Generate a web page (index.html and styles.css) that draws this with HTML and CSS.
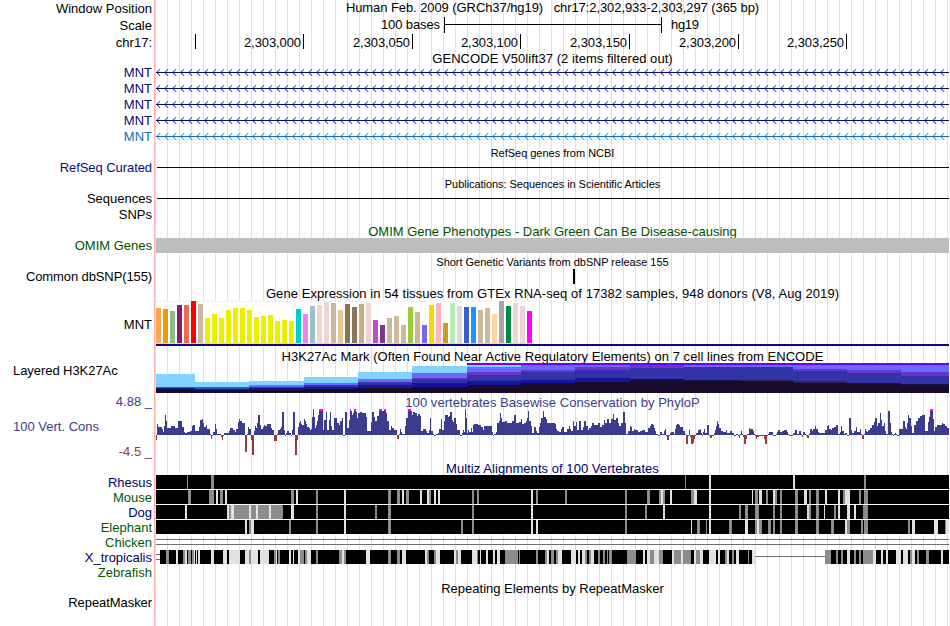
FILE: index.html
```html
<!DOCTYPE html>
<html lang="en">
<head>
    <meta charset="UTF-8">
    <meta name="viewport" content="width=device-width, initial-scale=1.0">
    <title>chr17:2,302,933-2,303,297 - Genome Browser</title>
    <link rel="stylesheet" href="styles.css">
</head>
<body>
    <div class="browser">
        <div class="row position">
            <div class="label">Window Position</div>
            <div class="title">Human Feb. 2009 (GRCh37/hg19) &nbsp; chr17:2,302,933-2,303,297 (365 bp)</div>
        </div>
        <div class="row scale">
            <div class="label">Scale</div>
            <svg class="track" id="scale" viewBox="156 0 793 17"></svg>
        </div>
        <div class="row ruler">
            <div class="label">chr17:</div>
            <svg class="track" id="ruler" viewBox="156 0 793 16"></svg>
        </div>

        <div class="row gencode-title"><div class="title">GENCODE V50lift37 (2 items filtered out)</div></div>
        <div class="row gene"><div class="label">MNT</div><svg class="track arrows" viewBox="156 0 793 16"></svg></div>
        <div class="row gene"><div class="label">MNT</div><svg class="track arrows" viewBox="156 0 793 16"></svg></div>
        <div class="row gene"><div class="label">MNT</div><svg class="track arrows" viewBox="156 0 793 16"></svg></div>
        <div class="row gene"><div class="label">MNT</div><svg class="track arrows" viewBox="156 0 793 16"></svg></div>
        <div class="row gene alt"><div class="label">MNT</div><svg class="track arrows" viewBox="156 0 793 16"></svg></div>

        <div class="row"><div class="title small refseq-title">RefSeq genes from NCBI</div></div>
        <div class="row refseq"><div class="label">RefSeq Curated</div><div class="track"><div class="line"></div></div></div>

        <div class="row short pubs-title"><div class="title small">Publications: Sequences in Scientific Articles</div></div>
        <div class="row pubs"><div class="label">Sequences</div><div class="track"><div class="line"></div></div></div>
        <div class="row pubs"><div class="label">SNPs</div></div>

        <div class="row omim-title"><div class="title">OMIM Gene Phenotypes - Dark Green Can Be Disease-causing</div></div>
        <div class="row omim"><div class="label">OMIM Genes</div><div class="track"><div class="band"></div></div></div>

        <div class="row short"><div class="title small">Short Genetic Variants from dbSNP release 155</div></div>
        <div class="row snp"><div class="label">Common dbSNP(155)</div><svg class="track" viewBox="156 0 793 16"><rect x="573" y="0" width="2" height="15"/></svg></div>

        <div class="row gtex-title"><div class="title">Gene Expression in 54 tissues from GTEx RNA-seq of 17382 samples, 948 donors (V8, Aug 2019)</div></div>
        <div class="row gtex"><div class="label">MNT</div><svg class="track" id="gtex" viewBox="156 301 793 45"></svg></div>

        <div class="row h3k-title"><div class="title">H3K27Ac Mark (Often Found Near Active Regulatory Elements) on 7 cell lines from ENCODE</div></div>
        <div class="row h3k"><div class="label left">Layered H3K27Ac</div><svg class="track" id="h3k" viewBox="156 363 793 31"></svg></div>

        <div class="row phylop">
            <div class="label">
                <div class="max">4.88 _</div>
                <div class="left">100 Vert. Cons</div>
                <div class="min">-4.5 _</div>
            </div>
            <div class="plot">
                <div class="title">100 vertebrates Basewise Conservation by PhyloP</div>
                <svg class="track" id="phylop" viewBox="156 409 793 52"></svg>
            </div>
        </div>

        <div class="row multiz-title"><div class="title">Multiz Alignments of 100 Vertebrates</div></div>
        <div class="row species"><div class="label">Rhesus</div><svg class="track" id="rhesus" viewBox="156 0 793 15"></svg></div>
        <div class="row species green"><div class="label">Mouse</div><svg class="track" id="mouse" viewBox="156 0 793 15"></svg></div>
        <div class="row species"><div class="label">Dog</div><svg class="track" id="dog" viewBox="156 0 793 15"></svg></div>
        <div class="row species green"><div class="label">Elephant</div><svg class="track" id="elephant" viewBox="156 0 793 15"></svg></div>
        <div class="row species green"><div class="label">Chicken</div><svg class="track" id="chicken" viewBox="156 0 793 15"></svg></div>
        <div class="row species"><div class="label">X_tropicalis</div><svg class="track" id="xtropicalis" viewBox="156 0 793 15"></svg></div>
        <div class="row species green"><div class="label">Zebrafish</div></div>

        <div class="row repeat-title"><div class="title">Repeating Elements by RepeatMasker</div></div>
        <div class="row short repeat"><div class="label">RepeatMasker</div></div>
    </div>

    <script>
        const LEFT = 156;
        const RIGHT = 949;

        function rect(x, y, w, h, fill) {
            return `<rect x="${x}" y="${y}" width="${w}" height="${h}" fill="${fill}"/>`;
        }

        function draw(id, content) {
            document.getElementById(id).innerHTML = content;
        }

        // Scale bar and base positions
        draw('scale',
            '<text x="381" y="12" textLength="59">100 bases</text>' +
            rect(444, 0, 1, 16, '#000') + rect(444, 7, 218, 1, '#000') + rect(661, 0, 1, 16, '#000') +
            '<text x="671" y="12" textLength="28">hg19</text>');

        const ticks = [[195, ''], [303, '2,303,000'], [412, '2,303,050'], [520, '2,303,100'],
            [629, '2,303,150'], [738, '2,303,200'], [846, '2,303,250']];
        draw('ruler', ticks.map(([x, text]) =>
            rect(x, 0, 1, 15, '#000') +
            (text ? `<text x="${x - 59}" y="13" textLength="57">${text}</text>` : '')).join(''));

        // Intron lines with strand arrows
        document.querySelectorAll('.arrows').forEach(svg => {
            let path = '';
            for (let x = LEFT; x < RIGHT - 4; x += 8) {
                path += `M${x + 4} 5.2L${x + 0.8} 8.5L${x + 4} 11.8`;
            }
            svg.innerHTML = `<path class="chevrons" d="${path}"/>` + rect(LEFT, 8, 793, 1, 'currentColor');
        });

        // GTEx: [color, top]
        const tissues = [
            ['#ffa54f', 308], ['#ee9a00', 309], ['#8fbc8f', 311], ['#8b1c62', 305], ['#ee6a50', 305],
            ['#ff0000', 301], ['#cdb79e', 304], ['#eeee00', 318], ['#eeee00', 314], ['#eeee00', 318],
            ['#eeee00', 310], ['#eeee00', 308], ['#eeee00', 308], ['#eeee00', 310], ['#eeee00', 317],
            ['#eeee00', 316], ['#eeee00', 315], ['#eeee00', 321], ['#eeee00', 320], ['#eeee00', 321],
            ['#00cdcd', 309], ['#ee82ee', 314], ['#9ac0cd', 306], ['#eed5d2', 305], ['#eed5d2', 302],
            ['#cdb79e', 303], ['#eec591', 310], ['#8b7355', 304], ['#8b7355', 307], ['#cdaa7d', 304],
            ['#eed5d2', 303], ['#b452cd', 320], ['#7a378b', 325], ['#cdb79e', 318], ['#cdb79e', 316],
            ['#cdb79e', 325], ['#9acd32', 307], ['#cdb79e', 312], ['#7a67ee', 325], ['#ffd700', 305],
            ['#ffb6c1', 303], ['#cd9b1d', 323], ['#b4eeb4', 303], ['#d9d9d9', 306], ['#3a5fcd', 307],
            ['#1e90ff', 307], ['#cdb79e', 310], ['#cdb79e', 308], ['#ffd39b', 314], ['#a6a6a6', 301],
            ['#008b45', 306], ['#eed5d2', 303], ['#eed5d2', 306], ['#ff00ff', 311]
        ];
        draw('gtex',
            rect(LEFT, 301, 378, 43, '#f2f2f2') + rect(LEFT, 302, 377, 41, '#fff') +
            rect(LEFT, 343, 378, 1, '#d9d9d9') +
            tissues.map(([color, top], i) => rect(LEFT + i * 7, top, 5, 343 - top, color)).join('') +
            rect(LEFT, 344, 793, 2, '#0c0c78'));

        // H3K27Ac: start x, then the top of each overlaid layer
        const T = '#6a00ff', L = '#80d4ff', V = '#6a6aff', P = '#6a35cf', I = '#3232a9',
            B = '#1414a0', M = '#2c5ccc', D = '#17104f', G = '#2e264c', K = '#180a28';
        const h3k = [
            [156, L, 374, M, 387, B, 388, D, 389, K, 390],
            [195, L, 382, M, 387, B, 389, D, 390, K, 391],
            [249, L, 381, V, 385, I, 387, B, 388, K, 390],
            [304, L, 377, V, 383, I, 385, B, 387, K, 389],
            [358, L, 372, V, 379, I, 382, B, 385, K, 388],
            [412, L, 366, V, 373, P, 378, I, 379, B, 383, K, 387],
            [467, T, 363, L, 365, V, 367, P, 372, I, 375, B, 381, K, 385],
            [521, T, 363, V, 365, P, 370, I, 372, B, 380, K, 383],
            [575, T, 363, V, 365, P, 367, I, 370, B, 378, K, 382],
            [630, T, 363, P, 365, I, 368, D, 379, K, 381],
            [684, T, 363, V, 365, I, 367, D, 380, K, 381],
            [738, T, 363, V, 365, I, 367, G, 380, K, 381],
            [793, T, 363, V, 365, P, 369, I, 371, G, 381, K, 383],
            [847, T, 363, V, 365, P, 370, I, 373, D, 383, K, 384],
            [901, T, 363, V, 365, P, 372, I, 376, D, 384, K, 386]
        ];
        draw('h3k', h3k.map((seg, i) => {
            const end = i + 1 < h3k.length ? h3k[i + 1][0] : RIGHT;
            let out = '';
            for (let j = 1; j < seg.length; j += 2) {
                out += rect(seg[0], seg[j + 1], end - seg[0], 393 - seg[j + 1], seg[j]);
            }
            return out;
        }).join(''));

        // PhyloP: "x,score" pairs, a score holds until the next x. 26 is clipped at the top.
        const phylop = `156,-5 157,11 158,8 162,6 163,3 164,9 165,20 166,14 167,7 171,9 175,7 178,14 182,8
            184,3 185,2 187,3 190,4 192,9 193,10 195,4 199,8 200,15 202,16 203,12 204,8 206,10 207,6 210,1
            211,-4 212,-1 213,3 215,11 216,6 217,1 221,-2 222,-5 223,-1 224,2 229,4 230,7 233,5 235,3 236,6
            238,13 239,16 240,14 242,12 245,-17 247,1 248,8 249,6 251,-5 252,-20 254,4 255,9 256,7 257,12
            258,20 260,10 261,6 263,8 264,10 265,9 267,11 271,7 272,5 274,-6 277,1 278,5 280,6 281,8 282,23
            284,5 285,-1 286,2 287,4 289,2 291,-1 292,5 293,23 295,-20 297,-5 298,8 299,12 300,14 301,11
            302,10 304,16 305,14 306,11 307,8 309,7 310,5 311,6 312,18 313,26 314,18 315,7 316,10 317,14
            318,20 319,26 323,5 324,15 326,23 327,5 329,15 330,23 331,9 332,5 334,17 337,12 339,10 340,14
            342,17 343,-1 345,23 347,7 349,15 350,26 351,24 352,20 353,22 354,26 356,23 357,17 358,22
            360,23 362,22 366,18 367,4 371,13 372,23 374,18 375,14 377,19 379,26 382,24 384,26 386,22
            387,14 389,5 391,9 392,7 394,5 397,-4 399,1 400,6 401,3 402,1 405,9 406,17 408,26 411,24 412,20
            413,23 415,22 417,19 418,21 420,19 421,4 423,6 426,4 427,2 429,5 430,17 431,4 433,1 434,-1
            436,1 438,2 439,6 441,16 442,5 444,14 445,20 448,18 449,19 450,23 452,15 453,13 454,17 456,11
            457,5 460,-1 462,2 463,5 464,3 465,26 466,17 467,2 468,5 469,3 471,7 472,3 473,10 474,11 478,10
            481,8 483,5 484,9 492,3 493,-1 494,1 496,3 497,12 499,14 500,22 501,17 502,13 505,14 507,12
            512,14 514,20 516,12 519,13 521,16 522,11 524,12 526,14 527,17 528,25 529,14 531,9 532,2
            534,8 536,4 537,2 539,8 540,12 541,17 543,25 544,18 546,16 547,12 555,11 556,6 557,4 559,3
            561,6 562,8 564,3 567,6 569,9 570,6 571,4 573,14 574,9 576,13 577,5 579,14 581,5 583,8 584,14
            586,9 588,5 589,7 591,9 592,12 594,10 598,12 600,8 602,10 604,15 605,12 607,16 609,12 611,16
            613,21 614,15 616,17 618,12 619,9 621,12 623,23 625,12 626,1 628,4 630,9 631,8 632,4 634,6
            635,5 638,3 640,4 642,5 645,3 648,7 650,9 651,11 653,10 654,7 655,4 656,1 658,-1 660,3 662,1
            664,4 665,6 666,-1 667,-5 669,-1 670,2 671,3 674,1 675,6 676,10 677,11 679,10 680,8 683,4 685,1
            686,-9 688,-1 689,5 690,-2 691,-9 693,-8 694,-4 695,-1 696,2 698,5 700,6 701,2 702,-1 703,3
            704,6 705,2 707,10 709,-1 710,-3 712,-1 714,2 715,5 716,9 717,14 718,11 719,7 721,4 723,3
            726,5 727,2 730,4 732,2 734,-1 736,1 738,-1 739,-3 740,1 741,4 742,1 743,-2 744,-9 746,-4
            747,1 749,7 750,6 753,4 754,1 755,-1 756,-4 757,-2 759,-1 763,-1 764,-4 765,-9 767,-1 768,1
            769,3 773,-1 776,1 777,3 778,5 780,3 782,4 784,5 787,3 788,1 789,-1 793,2 795,5 797,1 799,4
            801,1 802,-2 803,3 805,1 806,-1 807,-3 809,1 810,6 812,4 813,6 815,9 816,6 818,3 819,2 825,5
            827,9 828,10 829,6 831,5 832,7 834,8 836,10 838,1 840,3 841,9 842,4 844,1 845,2 847,-1 849,17
            851,5 852,2 854,4 856,8 857,3 860,6 861,1 862,-4 864,1 865,6 866,4 867,3 868,5 870,7 872,10
            874,13 875,17 877,9 878,12 880,22 881,15 882,9 884,12 885,4 886,1 888,24 890,12 891,3 892,1
            893,-1 894,1 895,2 896,1 897,-1 899,6 903,14 905,8 906,6 907,12 908,20 909,17 911,9 912,2
            914,10 916,14 918,17 920,19 922,20 925,4 928,13 929,18 930,26 933,16 934,4 935,8 937,10
            942,12 943,11 945,9 947,7`.split(/\s+/).map(p => p.split(',').map(Number));
        draw('phylop', phylop.map(([x, score], i) => {
            const w = (i + 1 < phylop.length ? phylop[i + 1][0] : RIGHT) - x;
            if (score < 0) {
                return rect(x, 435, w, -score, '#8c3c3c');
            }
            return rect(x, 435 - Math.min(score, 24), w, Math.min(score, 24), '#3c3c8c') +
                (score > 25 ? rect(x, 409, w, 2, '#ff00ff') : '');
        }).join(''));

        // Alignments: "x,width" of the mismatched stretches, g = grey, l = light
        const species = {
            rhesus: 'g187,1 g211,3 g685,1 l709,2 l793,2 g864,2',
            mouse: `g188,3 g209,5 l216,2 g220,3 l225,2 g291,3 l296,2 g316,2 l344,2 g388,3 g397,3 l402,2
                g406,3 l420,2 l427,2 g429,2 l434,2 l438,2 g472,2 g477,2 l531,2 g536,2 g565,2 g625,2 g647,3
                g659,2 l661,2 g663,2 l670,2 g691,3 l694,3 l709,2 l752,1 g755,3 l759,3 g766,2 l773,2 g775,2
                g780,2 g795,3 l804,3 g809,2 g816,3 l825,2 l838,2 g843,2 l845,5 g859,2 g864,4`,
            dog: `l185,2 l227,2 g229,2 l231,3 g234,15 l249,2 g251,5 l256,2 g258,11 l269,2 g271,12 l291,3
                g316,2 l344,2 g375,2 g388,3 g472,2 l531,2 g625,2 g645,2 l663,2 l709,2 g739,2 g745,3 g755,4
                g773,2 g780,2 g795,3 l807,2 g809,2 g816,3 l824,1 g834,2 l838,2 l847,3 l854,2 g863,5`,
            elephant: `l245,2 g249,2 l251,3 g289,2 g316,2 l344,2 g388,3 g461,2 g472,2 l531,2 l536,2 g625,2
                l691,1 g697,3 g706,1 l709,2 g729,3 l745,3 g755,2 l757,2 g759,3 g768,3 g773,2 g780,2 g795,3
                g816,3 g831,3 l845,2 g847,3 g861,2 g864,4 g908,2 l912,3 l934,4 g945,1 l946,3`,
            xtropicalis: `g166,3 l176,2 g183,2 l185,2 g188,3 g192,2 l194,1 l196,1 l198,2 l211,3 l223,4
                l229,11 l245,4 g249,2 l251,7 l260,9 g274,2 l276,1 g278,2 l289,2 l293,1 l298,2 g300,4
                g305,2 l307,4 g316,2 g339,3 l342,2 g344,2 l366,4 g388,3 g397,3 l402,4 l425,2 g427,2
                g434,2 l436,4 l454,2 g456,2 l458,3 l472,5 g477,1 l480,1 l486,2 l493,2 l497,3 g505,13
                g519,1 g536,2 g545,2 l547,2 g551,3 g556,2 l558,4 l571,5 l578,2 l582,3 g585,2 g589,2 l591,3
                g598,2 g603,2 g607,1 g609,3 g627,9 l643,2 l647,3 g650,4 l654,5 g659,4 l672,2 g674,2 g676,5
                l681,2 g683,8 l694,2 g696,4 l700,3 l709,7 l718,2 g725,2 l727,2 g732,2 l736,3 g748,1 l752,3
                g825,6 g836,2 g841,2 l847,3 g854,2 g859,2 g863,10 l873,3 l881,2 l886,2 l896,5 l903,5
                g910,2 l912,3 g917,2 g926,3 l941,2`
        };

        function mismatches(list) {
            return list.split(/\s+/).map(m => {
                const [x, w] = m.slice(1).split(',').map(Number);
                return rect(x, 0, w, 14, m[0] === 'g' ? '#8c8c8c' : '#e1e1e1');
            }).join('');
        }

        ['rhesus', 'mouse', 'dog', 'elephant'].forEach(id => {
            draw(id, rect(LEFT, 0, 793, 15, '#fff') + rect(LEFT, 0, 793, 14, '#000') + mismatches(species[id]));
        });
        draw('chicken', rect(LEFT, 4, 793, 1, '#6e6e6e') + rect(LEFT, 9, 793, 1, '#6e6e6e'));
        draw('xtropicalis',
            rect(LEFT, 4, 4, 1, '#6e6e6e') + rect(LEFT, 9, 4, 1, '#6e6e6e') +
            rect(160, 0, 595, 14, '#000') + rect(755, 6, 70, 1, '#6e6e6e') +
            rect(825, 0, 124, 14, '#000') + mismatches(species.xtropicalis));
    </script>
</body>
</html>
```
FILE: styles.css
```css
body {
    margin: 0;
    font-family: "Liberation Sans", Arial, sans-serif;
    font-size: 13px;
    color: #000;
    background-color: #fff;
}
/* red border of the label area, then a guideline every 12px */
.browser {
    width: 949px;
    height: 626px;
    overflow: hidden;
    background-image:
        linear-gradient(to right, #fff 154px, #ffb4b4 154px, #ffb4b4 155px, transparent 155px),
        repeating-linear-gradient(to right, transparent 0, transparent 11px, #dcdcff 11px, #dcdcff 12px);
}
.row {
    display: flex;
    height: 16px;
    line-height: 16px;
    white-space: nowrap;
}
.label {
    width: 152px;
    flex: none;
    text-align: right;
}
.label.left,
.label .left {
    text-align: left;
    padding-left: 13px;
    box-sizing: border-box;
}
.title {
    width: 793px;
    margin-left: auto;
    text-align: center;
    letter-spacing: 0.05px;
}
.title.small {
    font-size: 11px;
    letter-spacing: -0.02px;
}
.track {
    display: block;
    width: 793px;
    height: 100%;
    margin-left: 4px;
    shape-rendering: crispEdges;
}
.short {
    height: 15px;
}
.position {
    height: 17px;
    line-height: 17px;
}
.position .title {
    line-height: 15px;
    letter-spacing: -0.08px;
}
.scale {
    height: 17px;
    line-height: 17px;
}
.ruler {
    line-height: 17px;
}
.gencode-title {
    height: 14px;
    line-height: 17px;
}
.gene {
    color: #0c0c78;
}
.gene.alt {
    color: #0a6fb4;
}
.gene .label {
    line-height: 17px;
}
.chevrons {
    fill: none;
    stroke: currentColor;
    stroke-width: 1;
    shape-rendering: auto;
}
.refseq-title {
    line-height: 18px;
}
.refseq .label {
    color: #0c0c78;
    letter-spacing: -0.07px;
}
.refseq .line {
    margin: 7px 0 0 1px;
    height: 1px;
    background-color: #00005a;
}
.refseq {
    height: 15px;
}
.pubs-title {
    line-height: 18px;
}
.pubs-title .title {
    letter-spacing: -0.05px;
}
.pubs {
    line-height: 18px;
}
.pubs .line {
    margin: 8px 0 0 1px;
    height: 1px;
    background-color: #000;
}
.omim,
.omim-title {
    color: #005000;
}
.omim-title {
    line-height: 20px;
}
.omim-title .title {
    letter-spacing: 0;
}
.band {
    height: 15px;
    background-color: #bebebe;
}
.snp .label {
    letter-spacing: -0.11px;
}
.gtex-title {
    line-height: 18px;
}
.gtex-title .title {
    letter-spacing: 0.065px;
}
.gtex {
    height: 45px;
    line-height: 48px;
}
.h3k-title {
    height: 17px;
    line-height: 22px;
}
.h3k {
    height: 31px;
}
.h3k .label {
    letter-spacing: -0.06px;
}
.phylop {
    height: 67px;
    color: #3c3c8c;
}
.phylop .max {
    margin-bottom: 9px;
}
.phylop .min {
    margin-top: 9px;
    color: #8c3c3c;
}
.phylop .plot .title {
    height: 15px;
    line-height: 17px;
}
.phylop .plot .track {
    height: 52px;
}
.multiz-title {
    height: 14px;
    line-height: 16px;
    color: #000064;
}
.species {
    height: 15px;
    line-height: 15px;
    color: #000064;
}
.species.green {
    color: #005a00;
}
.repeat-title {
    height: 15px;
    line-height: 18px;
}
.repeat-title .title {
    letter-spacing: 0;
}
.repeat .label {
    letter-spacing: -0.07px;
}
```
